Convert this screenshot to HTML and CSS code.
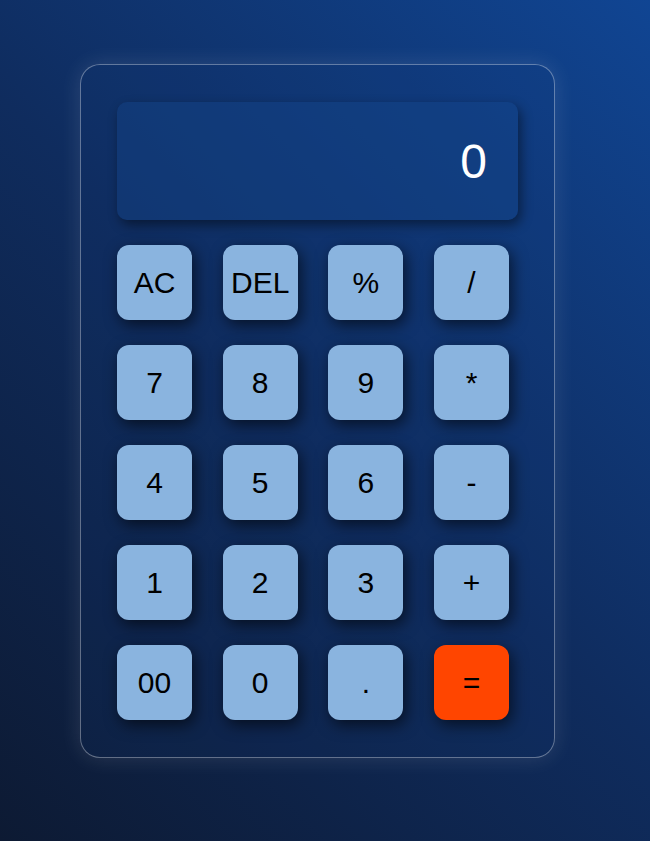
FILE: index.html
```html
<!DOCTYPE html>
<html lang="en">
<head>
<meta charset="utf-8">
<title>Calculator</title>
<link rel="stylesheet" href="styles.css">
</head>
<body>
<div class="page">
  <div class="calculator">
    <div class="display">0</div>
    <div class="keys">
      <button class="key">AC</button>
      <button class="key">DEL</button>
      <button class="key">%</button>
      <button class="key">/</button>
      <button class="key">7</button>
      <button class="key">8</button>
      <button class="key">9</button>
      <button class="key">*</button>
      <button class="key">4</button>
      <button class="key">5</button>
      <button class="key">6</button>
      <button class="key">-</button>
      <button class="key">1</button>
      <button class="key">2</button>
      <button class="key">3</button>
      <button class="key">+</button>
      <button class="key">00</button>
      <button class="key">0</button>
      <button class="key">.</button>
      <button class="key key-equals">=</button>
    </div>
  </div>
</div>
</body>
</html>
```

FILE: styles.css
```css
html, body {
  margin: 0;
  padding: 0;
}

body {
  width: 650px;
  height: 841px;
  overflow: hidden;
  background: linear-gradient(45deg, #0d1a33 0%, #0f2c5e 50%, #104593 100%);
  font-family: "Liberation Sans", Arial, sans-serif;
}

.page {
  padding: 64px 0 0 80px;
}

.calculator {
  width: 401px;
  padding: 37px 36px;
  border: 1px solid rgba(255, 255, 255, 0.35);
  border-radius: 20px;
  background: rgba(20, 60, 120, 0.12);
  box-shadow: 0 0 22px rgba(255, 255, 255, 0.12);
}

.display {
  height: 118px;
  border-radius: 10px;
  background: rgba(20, 70, 140, 0.4);
  box-shadow: 3px 5px 12px rgba(0, 0, 0, 0.45);
  display: flex;
  align-items: center;
  justify-content: flex-end;
  padding: 0 31px;
  color: #ffffff;
  font-size: 48px;
  margin-bottom: 25px;
}

.keys {
  display: grid;
  grid-template-columns: repeat(4, 75px);
  column-gap: 30.67px;
  row-gap: 25px;
}

.key {
  width: 75px;
  height: 75px;
  border: none;
  border-radius: 12px;
  background: #8ab4df;
  color: #000000;
  font-family: "Liberation Sans", Arial, sans-serif;
  font-size: 30px;
  padding: 0;
  box-shadow: 3px 5px 15px rgba(0, 0, 0, 0.6);
}

.key-equals {
  background: #ff4500;
}
```
